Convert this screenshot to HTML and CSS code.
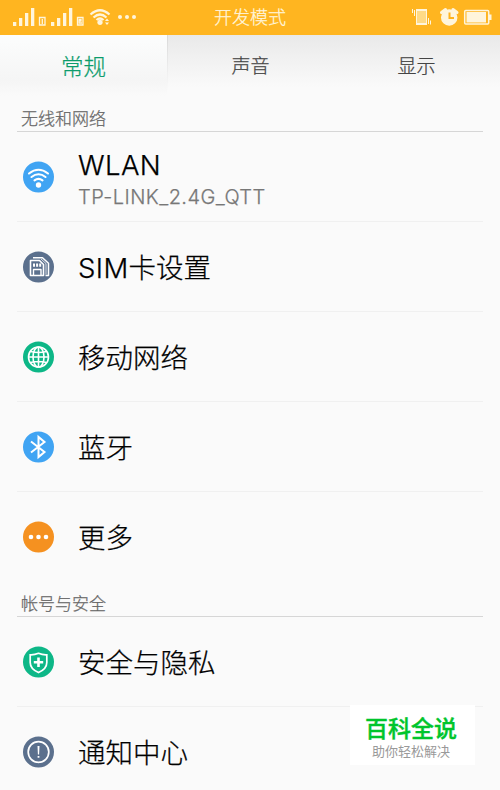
FILE: index.html
```html
<!DOCTYPE html>
<html lang="zh-CN">
<head>
    <meta charset="UTF-8">
    <meta name="viewport" content="width=device-width, initial-scale=1.0">
    <title>设置</title>
    <link rel="stylesheet" href="styles.css">
</head>
<body>
    <header class="statusbar">
        <svg class="status-left" width="140" height="35" viewBox="0 0 140 35">
            <g fill="#fff5dc">
                <path d="M13 22h3.300v4h-3.300zM19 18h3.300v8h-3.300zM25 13h3.300v13h-3.300zM31 8h3.300v18h-3.300z"/>
                <path d="M51 22h3.300v4h-3.300zM57 18h3.300v8h-3.300zM63 13h3.300v13h-3.300zM69 8h3.300v18h-3.300z"/>
                <circle cx="100" cy="22.300" r="2.600"/>
                <circle cx="120" cy="17" r="2"/><circle cx="127" cy="17" r="2"/><circle cx="134" cy="17" r="2"/>
                <path d="M105 21l2-2.500 2 2.500zM105 22.500l2 2.500 2-2.500z"/>
            </g>
            <g fill="none" stroke="#fff5dc" stroke-width="1.300">
                <path d="M39.500 17.500h5.500v7.500h-5.500zM42.300 19v5M77.500 17.500h5.500v7.500h-5.500z"/>
                <path d="M78.500 19.500h2.500v1.500h-2v2h3"/>
            </g>
            <g fill="none" stroke="#fff5dc" stroke-width="2.200">
                <path d="M90.500 14.500q9.500-8.500 19 0M93.500 17.500q6.500-6 13 0M96.500 20q3.500-3 7 0"/>
            </g>
        </svg>
        <h1 class="status-title">开发模式</h1>
        <svg class="status-right" width="100" height="35" viewBox="0 0 100 35">
            <g fill="none" stroke="#fff5dc">
                <rect x="16.500" y="9.500" width="10" height="15" fill="#ffda85"/>
                <path d="M16 10h11M16 24h11" stroke-width="2"/>
                <path d="M12.500 9v4M14.500 10v6M28.500 18v6M30.500 20.500v4"/>
                <path d="M41.500 12.500l4-3M57 12.500l-4-3" stroke-width="3" stroke-linecap="round"/>
                <circle cx="49.200" cy="17.500" r="7.500" fill="#fff5dc" stroke-width="1.500"/>
                <path d="M49.500 12.500v5.500h4.500" stroke="#ffb31e" stroke-width="2"/>
                <rect x="64.700" y="10.500" width="24" height="13.500" rx="1" stroke-width="1.500"/>
            </g>
            <path d="M66.500 12h19.500v10.500h-19.500zM89 14.500h2.500v5.500h-2.500z" fill="#fff5dc"/>
        </svg>
    </header>

    <nav class="tabs">
        <a class="tab active">常规</a>
        <a class="tab">声音</a>
        <a class="tab">显示</a>
    </nav>

    <main class="settings">
        <h2 class="section-title">无线和网络</h2>
        <ul class="list">
            <li class="item">
                <svg class="icon" viewBox="0 0 32 32">
                    <circle cx="16" cy="16" r="15.500" fill="#40a4f3"/>
                    <g fill="none" stroke="#fff" stroke-width="2.100" stroke-linecap="round">
                        <path d="M6.500 12.500q9.500-7.500 19 0M9 16q7-5.500 14 0M12 19.300q4-3 8 0"/>
                    </g>
                    <circle cx="16" cy="24" r="2.700" fill="#fff"/>
                </svg>
                <div class="text wlan">
                    <span class="name">WLAN</span>
                    <span class="detail">TP-LINK_2.4G_QTT</span>
                </div>
            </li>
            <li class="item">
                <svg class="icon" viewBox="0 0 32 32">
                    <circle cx="16" cy="16" r="15.500" fill="#5b708d"/>
                    <g fill="none" stroke="#fff" stroke-linejoin="round">
                        <path d="M8 9.500h9l4 4v11h-13z" stroke-width="1.600"/>
                        <path d="M10.500 6.800h9.500l6 5.500v12.200h-3" stroke-width="1.500"/>
                        <path d="M18.500 8l5 4.500v11" stroke-width=".8"/>
                        <path d="M11 24v-5.500h7.500v5.500" stroke-width="1.400"/>
                    </g>
                    <path d="M10.500 12.500h2v3.300h-2zM13.600 12.500h2v3.300h-2zM16.700 12.500h2v3.300h-2z" fill="#fff"/>
                </svg>
                <span class="name"><span class="latin">SIM</span>卡设置</span>
            </li>
            <li class="item">
                <svg class="icon" viewBox="0 0 32 32">
                    <circle cx="16" cy="16" r="15.500" fill="#0db787"/>
                    <g fill="none" stroke="#fff" stroke-width="1.600">
                        <circle cx="16" cy="16" r="10"/>
                        <ellipse cx="16" cy="16" rx="5.500" ry="10"/>
                        <path d="M16 6v20M6 16h20M8 10.500q8 2 16 0M8 21.500q8-2 16 0"/>
                    </g>
                </svg>
                <span class="name">移动网络</span>
            </li>
            <li class="item">
                <svg class="icon" viewBox="0 0 32 32">
                    <circle cx="16" cy="16" r="15.500" fill="#40a4f3"/>
                    <path d="M8.500 10.500l13.500 10.500-6 5V6l6 5L8.500 21.500" fill="none" stroke="#fff" stroke-width="2"/>
                </svg>
                <span class="name">蓝牙</span>
            </li>
            <li class="item">
                <svg class="icon" viewBox="0 0 32 32">
                    <circle cx="16" cy="16" r="15.500" fill="#f59120"/>
                    <g fill="#fff">
                        <circle cx="8.500" cy="16" r="2.300"/>
                        <circle cx="16" cy="16" r="2.300"/>
                        <circle cx="23.500" cy="16" r="2.300"/>
                    </g>
                </svg>
                <span class="name">更多</span>
            </li>
        </ul>

        <h2 class="section-title">帐号与安全</h2>
        <ul class="list">
            <li class="item">
                <svg class="icon" viewBox="0 0 32 32">
                    <circle cx="16" cy="16" r="15.500" fill="#0db787"/>
                    <path d="M16 7.300q4 1.700 8.300 1.500v7.700q0 6.500-8.300 10-8.300-3.500-8.300-10V8.800q4.300.2 8.300-1.500z" fill="none" stroke="#fff" stroke-width="1.700"/>
                    <path d="M16 11.500v9.500M11.300 16.200h9.400" stroke="#fff" stroke-width="2.600"/>
                </svg>
                <span class="name">安全与隐私</span>
            </li>
            <li class="item">
                <svg class="icon" viewBox="0 0 32 32">
                    <circle cx="16" cy="16" r="15.500" fill="#5b708d"/>
                    <circle cx="16" cy="16" r="10.300" fill="none" stroke="#fff" stroke-width="1.700"/>
                    <path d="M15 10h2l-.4 8.500h-1.200zM15.100 20h1.800v1.800h-1.800z" fill="#fff"/>
                </svg>
                <span class="name">通知中心</span>
            </li>
        </ul>
    </main>

    <aside class="badge">
        <strong class="badge-title">百科全说</strong>
        <span class="badge-text">助你轻松解决</span>
    </aside>
</body>
</html>
```
FILE: styles.css
```css
* {
    box-sizing: border-box;
}
body {
    margin: 0;
    height: 790px;
    overflow: hidden;
    position: relative;
    background-color: #fafafa;
    font-family: Inter, "Noto Sans CJK SC", sans-serif;
    font-weight: 300;
    color: #000;
    -webkit-text-stroke: 0.25px currentColor;
}
.statusbar {
    height: 35px;
    display: grid;
    grid-template-columns: 140px 1fr 100px;
    background-color: #ffb520;
}
.status-title {
    margin: 0;
    padding-right: 40px;
    padding-top: 1px;
    font-size: 18px;
    font-weight: 300;
    line-height: 34px;
    text-align: center;
    color: #fff5dc;
}

.tabs {
    height: 58px;
    display: grid;
    grid-template-columns: 168px 165px 167px;
    background: linear-gradient(#e9e9e9, #fafafa 90%);
}
.tab {
    padding-top: 2px;
    font-size: 19px;
    line-height: 59px;
    text-align: center;
    color: #444;
}
.tab.active {
    background: linear-gradient(#fcfdfd, #f5f5f5 75%, #fafafa);
    border-right: 1px solid;
    border-image: linear-gradient(#d8d8d8, #fafafa 90%) 1;
    font-size: 22.5px;
    color: #0c9c6c;
}

.settings {
    padding: 0 17px;
}
.section-title {
    height: 35px;
    margin: 0;
    padding: 5px 0 0 4px;
    border-bottom: 1px solid #d6d6d6;
    font-size: 17px;
    font-weight: 300;
    line-height: 34px;
    color: #666;
}
.tabs + .settings .section-title:first-child {
    height: 39px;
    padding-top: 9px;
}
.list {
    margin: 0;
    padding: 0;
    list-style: none;
}
.item {
    height: 90px;
    display: flex;
    align-items: center;
    gap: 23px;
    padding-left: 5px;
    border-bottom: 1px solid #f0f0f0;
}
.item:last-child {
    border-bottom-color: transparent;
}
.icon {
    flex: none;
    width: 33px;
    height: 32px;
}
.name {
    font-size: 27.5px;
    line-height: 36px;
    padding-top: 2px;
}
.latin {
    letter-spacing: 0.4px;
}
.text {
    display: flex;
    flex-direction: column;
}
.wlan {
    padding-top: 5px;
}
.wlan .name {
    padding-top: 0;
    letter-spacing: 0.4px;
}
.detail {
    font-size: 20px;
    line-height: 28px;
    letter-spacing: 0.45px;
    color: #777;
}

/* floats over the list */
.badge {
    position: absolute;
    left: 350px;
    top: 705px;
    width: 125px;
    height: 60px;
    padding: 9px 3px 0 0;
    display: flex;
    flex-direction: column;
    align-items: center;
    background-color: #fff;
    -webkit-text-stroke: 0;
}
.badge-title {
    font-size: 23px;
    font-weight: 500;
    line-height: 30px;
    color: #00c52c;
    -webkit-text-stroke: 0.4px currentColor;
}
.badge-text {
    font-size: 13px;
    font-weight: 400;
    line-height: 14px;
    color: #999;
}
```
